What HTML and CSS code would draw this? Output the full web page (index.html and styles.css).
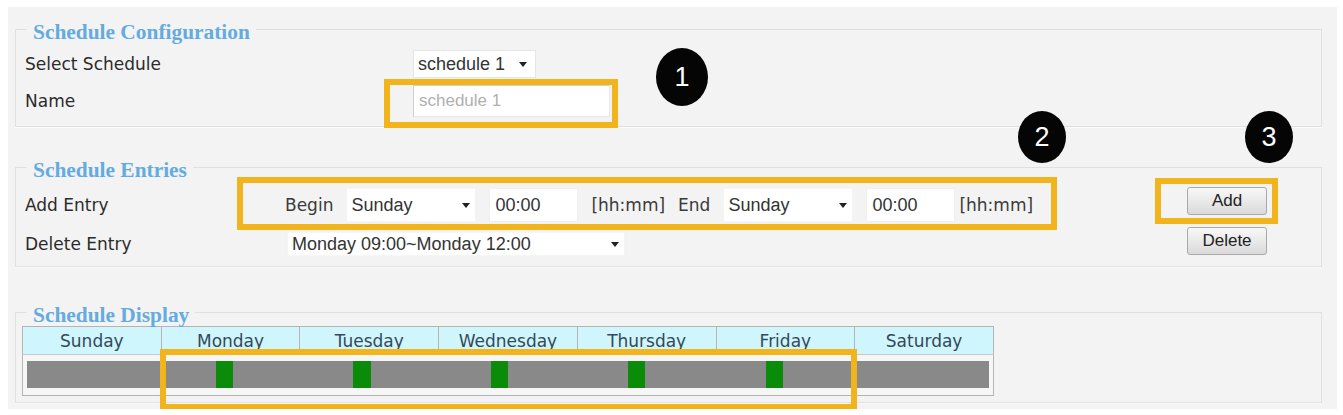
FILE: index.html
```html
<!DOCTYPE html>
<html lang="en">
<head>
    <meta charset="UTF-8">
    <meta name="viewport" content="width=device-width, initial-scale=1.0">
    <title>Schedule</title>
    <link rel="stylesheet" href="styles.css">
</head>
<body>
    <div class="page">
        <fieldset class="group config">
            <legend>Schedule Configuration</legend>
            <div class="row">
                <label class="label wide">Select Schedule</label>
                <span class="select sched">
                    <select><option>schedule 1</option></select>
                </span>
            </div>
            <div class="row">
                <label class="label wide">Name</label>
                <input class="name-input" type="text" placeholder="schedule 1">
            </div>
        </fieldset>

        <fieldset class="group entries">
            <legend>Schedule Entries</legend>
            <div class="entry-rows">
                <div class="row add-row">
                    <label class="label narrow">Add Entry</label>
                    <span class="word">Begin</span>
                    <span class="select day">
                        <select><option>Sunday</option></select>
                    </span>
                    <input class="time" type="text" value="00:00">
                    <span class="word">[hh:mm]</span>
                    <span class="word end">End</span>
                    <span class="select day">
                        <select><option>Sunday</option></select>
                    </span>
                    <input class="time" type="text" value="00:00">
                    <span class="word unit">[hh:mm]</span>
                </div>
                <div class="row">
                    <label class="label narrow del">Delete Entry</label>
                    <span class="select entry-list">
                        <select><option>Monday 09:00~Monday 12:00</option></select>
                    </span>
                </div>
            </div>
            <div class="actions">
                <button>Add</button>
                <button>Delete</button>
            </div>
        </fieldset>

        <fieldset class="group display">
            <legend>Schedule Display</legend>
            <table class="week">
                <tr>
                    <th>Sunday</th>
                    <th>Monday</th>
                    <th>Tuesday</th>
                    <th>Wednesday</th>
                    <th>Thursday</th>
                    <th>Friday</th>
                    <th>Saturday</th>
                </tr>
                <tr>
                    <td colspan="7">
                        <!-- one slot per entry, hour offset / 168 hours in a week -->
                        <div class="timeline">
                            <span class="slot" style="left: 19.64%; width: 1.79%;"></span>
                            <span class="slot" style="left: 33.93%; width: 1.79%;"></span>
                            <span class="slot" style="left: 48.21%; width: 1.79%;"></span>
                            <span class="slot" style="left: 62.50%; width: 1.79%;"></span>
                            <span class="slot" style="left: 76.79%; width: 1.79%;"></span>
                        </div>
                    </td>
                </tr>
            </table>
        </fieldset>

        <!-- highlight boxes and step numbers -->
        <span class="mark mark-name"></span>
        <span class="mark mark-entry"></span>
        <span class="mark mark-add"></span>
        <span class="mark mark-week"></span>
        <span class="step step-1">1</span>
        <span class="step step-2">2</span>
        <span class="step step-3">3</span>
    </div>
</body>
</html>
```

FILE: styles.css
```css
body {
    margin: 0;
    background-color: #fff;
    font-family: "DejaVu Sans", Verdana, sans-serif;
    color: #2b2b2b;
}
.page {
    position: relative;
    margin: 7px 0 0 8px;
    width: 1329px;
    box-sizing: border-box;
    padding: 8px 15px 6px 7px;
    background-color: #f3f3f3;
}
.group {
    margin: 0;
    padding: 0 0 0 9px;
    border: 1px solid #e0e0e0;
    box-shadow: 0 1px 0 #fafafa;
}
.group legend {
    margin-left: 2px;
    padding: 6px 6px 0;
    font-family: "Liberation Serif", "Times New Roman", serif;
    font-weight: bold;
    font-size: 21.4px;
    line-height: 22px;
    color: #64abe0;
}
.row {
    display: flex;
    align-items: center;
}
.label {
    font-size: 17px;
    flex: none;
}
.label.wide {
    width: 388px;
}
.label.narrow {
    width: 260px;
}
.label.del {
    width: 262px;
}

/* Schedule Configuration */
.config {
    padding-top: 7px;
    padding-bottom: 9px;
}
.config .row + .row {
    margin-top: 7px;
}
.select {
    position: relative;
    display: inline-block;
    flex: none;
}
.select select {
    appearance: none;
    -webkit-appearance: none;
    width: 100%;
    height: 100%;
    margin: 0;
    padding: 0 0 0 4px;
    border: 1px solid #e2e2e2;
    background-color: #fff;
    font-family: "Liberation Sans", Arial, sans-serif;
    font-size: 18px;
    color: #333;
    outline: none;
}
.select::after {
    content: "";
    position: absolute;
    right: 6px;
    top: 50%;
    margin-top: -2px;
    border-left: 4px solid transparent;
    border-right: 4px solid transparent;
    border-top: 5px solid #222;
    pointer-events: none;
}
.sched {
    width: 123px;
    height: 28px;
}
.sched select {
    border-color: #e6e6e6;
}
.sched::after {
    right: 9px;
}
.name-input {
    width: 197px;
    height: 32px;
    box-sizing: border-box;
    margin: 0;
    padding: 0 5px;
    border: 1px solid #cfcfcf;
    border-right-color: #e8e8e8;
    border-bottom-color: #e8e8e8;
    background-color: #fff;
    font-family: "Liberation Sans", Arial, sans-serif;
    font-size: 17px;
}
.name-input::placeholder {
    color: #b0b0b0;
}

/* Schedule Entries */
.entries {
    display: flex;
    margin-top: 26px;
    padding-top: 7px;
    padding-bottom: 10px;
}
.entry-rows {
    flex: 1;
}
.add-row {
    height: 34px;
}
.add-row > .word,
.add-row > .select,
.add-row > .time {
    margin-left: 13px;
}
.add-row > .label + .word {
    margin-left: 0;
}
.add-row > .unit {
    margin-left: 4px;
}
.entry-rows .row + .row {
    margin-top: 10px;
}
.word {
    font-size: 17px;
    color: #3a3a3a;
    flex: none;
}
.day {
    width: 130px;
    height: 34px;
}
.day select {
    border-color: #f4f4f4;
}
.time {
    width: 89px;
    height: 34px;
    box-sizing: border-box;
    padding: 0 5px;
    border: 1px solid #f0f0f0;
    background-color: #fff;
    font-family: "Liberation Sans", Arial, sans-serif;
    font-size: 18px;
    color: #333;
}
.entry-list {
    width: 338px;
    height: 24px;
}
.entry-list select {
    border-color: #f6f6f6;
}
.actions {
    display: flex;
    flex-direction: column;
    gap: 12px;
    margin: -1px 54px 0 0;
}
.actions button {
    width: 80px;
    height: 28px;
    padding: 0;
    border: 1px solid #a9a9a9;
    border-radius: 3px;
    background: linear-gradient(#f8f8f8, #dadada);
    font-family: "Liberation Sans", Arial, sans-serif;
    font-size: 17px;
    color: #222;
}

/* Schedule Display */
.display {
    margin-top: 31px;
    padding: 0 0 6px 6px;
}
.display legend {
    margin-left: 5px;
}
.week {
    width: 972px;
    border-collapse: collapse;
    border: 1px solid #b4b4b4;
    table-layout: fixed;
}
.week th {
    height: 27px;
    padding: 0;
    border-right: 1px solid #b6b6b6;
    border-bottom: 1px solid #c8c8c8;
    background-color: #cff6fc;
    font-weight: normal;
    font-size: 17px;
    color: #34495a;
}
.week td {
    padding: 6px 4px 7px;
    background-color: #f6f6f6;
}
.timeline {
    position: relative;
    height: 27px;
    background-color: #898989;
}
.slot {
    position: absolute;
    top: 0;
    bottom: 0;
    background-color: #0a8c0a;
}

/* callouts drawn over the form */
.mark {
    position: absolute;
    box-sizing: border-box;
    border: 6px solid #f2b41c;
    pointer-events: none;
}
.mark-name {
    left: 376px;
    top: 72px;
    width: 234px;
    height: 49px;
}
.mark-entry {
    left: 229px;
    top: 170px;
    width: 820px;
    height: 53px;
}
.mark-add {
    left: 1147px;
    top: 171px;
    width: 123px;
    height: 46px;
}
.mark-week {
    left: 152px;
    top: 342px;
    width: 697px;
    height: 61px;
}
.step {
    position: absolute;
    width: 48px;
    height: 52px;
    border-radius: 50%;
    background-color: #050505;
    color: #fff;
    font-family: "Liberation Sans", Arial, sans-serif;
    font-size: 27px;
    line-height: 52px;
    text-align: center;
}
.step-1 {
    left: 648px;
    top: 41px;
    width: 52px;
    height: 58px;
    line-height: 58px;
}
.step-2 {
    left: 1010px;
    top: 104px;
}
.step-3 {
    left: 1237px;
    top: 104px;
}
```
